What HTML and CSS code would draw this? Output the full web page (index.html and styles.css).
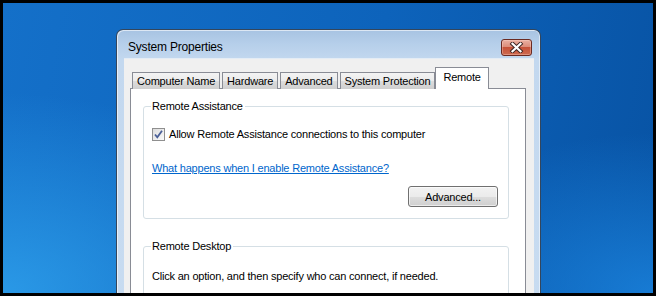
FILE: index.html
```html
<!DOCTYPE html>
<html lang="en">
<head>
    <meta charset="UTF-8">
    <title>System Properties</title>
    <link rel="stylesheet" href="styles.css">
</head>
<body>
    <div class="desktop">
        <div class="window">
            <div class="titlebar">
                <span class="title">System Properties</span>
                <button class="close" aria-label="Close">
                    <svg width="15" height="11" viewBox="0 0 15 11">
                        <path d="M3.5 1.8 L11.5 9.2 M11.5 1.8 L3.5 9.2" fill="none" stroke="#3b2422" stroke-width="4" stroke-linecap="square"/>
                        <path d="M3.5 1.8 L11.5 9.2 M11.5 1.8 L3.5 9.2" fill="none" stroke="#fff" stroke-width="2.2" stroke-linecap="square"/>
                    </svg>
                </button>
            </div>
            <div class="client">
                <div class="tabs">
                    <div class="tab">Computer Name</div>
                    <div class="tab">Hardware</div>
                    <div class="tab">Advanced</div>
                    <div class="tab">System Protection</div>
                    <div class="tab active">Remote</div>
                </div>
                <div class="panel">
                    <fieldset class="group">
                        <legend>Remote Assistance</legend>
                        <label class="check-row">
                            <span class="checkbox">
                                <svg width="11" height="11" viewBox="0 0 11 11">
                                    <path d="M2 5.5 L4.3 8.3 L9 1.8" fill="none" stroke="#4a5f97" stroke-width="1.8"/>
                                </svg>
                            </span>
                            Allow Remote Assistance connections to this computer
                        </label>
                        <a class="link" href="#">What happens when I enable Remote Assistance?</a>
                        <div class="button-row">
                            <button class="btn">Advanced...</button>
                        </div>
                    </fieldset>
                    <fieldset class="group group-desktop">
                        <legend>Remote Desktop</legend>
                        <p class="hint">Click an option, and then specify who can connect, if needed.</p>
                    </fieldset>
                </div>
            </div>
        </div>
    </div>
</body>
</html>
```

FILE: styles.css
```css
/* Black frame round the whole capture */
body {
    margin: 0;
    padding: 3px;
    background-color: #000;
    font-family: "Liberation Sans", Arial, sans-serif;
    font-size: 11px;
    letter-spacing: -0.2px;
    color: #000;
}

.desktop {
    height: 290px;
    overflow: hidden;
    box-sizing: border-box;
    padding: 26px 0 0 113px;
    background:
        radial-gradient(ellipse 320px 200px at 0% 100%, rgba(46, 160, 236, 0.85), transparent),
        radial-gradient(ellipse 260px 160px at 100% 100%, rgba(30, 140, 232, 0.7), transparent),
        linear-gradient(100deg, #1470c9 0%, #0d63bb 55%, #0853a4 100%);
}

/* Aero style window */
.window {
    width: 425px;
    height: 300px;
    box-sizing: border-box;
    border: 1px solid #34465c;
    border-bottom: none;
    border-radius: 7px 7px 0 0;
    padding: 0 6px 0 7px;
    background: linear-gradient(to bottom, #a7c3e2 0px, #b6cfea 14px, #c3d8ef 30px, #c8dcf1 100%);
    box-shadow: inset 1px 1px 0 rgba(255, 255, 255, 0.6), inset -1px 0 0 rgba(255, 255, 255, 0.5);
}

.titlebar {
    height: 28px;
    box-sizing: border-box;
    padding-top: 9px;
    display: flex;
    justify-content: space-between;
    align-items: flex-start;
}

.title {
    padding-left: 4px;
    font-size: 12px;
    line-height: 16px;
}

.close {
    width: 31px;
    height: 17px;
    margin-right: 2px;
    padding: 0;
    border: 1px solid #6a2a22;
    border-radius: 3px;
    display: flex;
    justify-content: center;
    align-items: center;
    background: linear-gradient(to bottom, #eab0a2 0%, #dc8d7a 45%, #c65239 50%, #cd6a50 100%);
    box-shadow: inset 0 0 0 1px rgba(255, 220, 210, 0.35);
}

.client {
    height: 100%;
    box-sizing: border-box;
    padding: 8px 8px 0 6px;
    background-color: #f0f0f0;
    border-top: 1px solid #e4ecf5;
}

.tabs {
    display: flex;
    align-items: flex-end;
    padding-left: 2px;
    margin-bottom: -1px;
    position: relative;
    white-space: nowrap;
}

.tab {
    flex-shrink: 0;
    height: 16px;
    line-height: 17px;
    padding: 0 4px;
    margin-right: 2px;
    border: 1px solid #898c95;
    border-bottom: none;
    background: linear-gradient(to bottom, #f3f3f3 0%, #ebebeb 50%, #dddddd 51%, #cfcfcf 100%);
}

.tab.active {
    height: 21px;
    line-height: 18px;
    margin: 0 0 0 -2px;
    padding: 0 7px;
    background: #fff;
    position: relative;
    z-index: 1;
}

.panel {
    height: 220px;
    border: 1px solid #898c95;
    background-color: #fff;
    padding: 9px 16px 0 12px;
}

.group {
    margin: 0;
    padding: 0 10px 11px 8px;
    border: 1px solid #d5dfe5;
    border-radius: 3px;
}

.group legend {
    padding: 0 2px 0 1px;
    margin-left: -1px;
    line-height: 16px;
}

.check-row {
    display: flex;
    align-items: center;
    gap: 4px;
    margin-top: 12px;
    line-height: 16px;
}

.checkbox {
    width: 11px;
    height: 11px;
    border: 1px solid #8f8f8f;
    background: linear-gradient(135deg, #dcdcdc, #fbfbfb);
    display: flex;
    justify-content: center;
    align-items: center;
}

.link {
    display: block;
    margin-top: 18px;
    line-height: 16px;
    color: #0066cc;
}

.button-row {
    display: flex;
    justify-content: flex-end;
    margin-top: 10px;
}

.btn {
    width: 90px;
    height: 21px;
    padding: 0;
    font: inherit;
    letter-spacing: inherit;
    color: #000;
    border: 1px solid #707070;
    border-radius: 3px;
    background: linear-gradient(to bottom, #f2f2f2 0%, #ebebeb 50%, #dddddd 51%, #cfcfcf 100%);
    box-shadow: inset 0 0 0 1px rgba(255, 255, 255, 0.6);
}

.group-desktop {
    margin-top: 19px;
}

.hint {
    margin: 14px 0 0;
    line-height: 16px;
}
```
